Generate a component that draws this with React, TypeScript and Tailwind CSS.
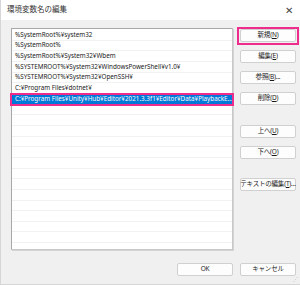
import React from "react";

const paths = [
  "%SystemRoot%¥system32",
  "%SystemRoot%",
  "%SystemRoot%¥System32¥Wbem",
  "%SYSTEMROOT%¥System32¥WindowsPowerShell¥v1.0¥",
  "%SYSTEMROOT%¥System32¥OpenSSH¥",
  "C:¥Program Files¥dotnet¥",
  "C:¥Program Files¥Unity¥Hub¥Editor¥2021.3.3f1¥Editor¥Data¥PlaybackE...",
];

const font = { fontFamily: '"Noto Sans", "Noto Sans CJK JP", sans-serif' };

function Btn({ label, mark, className = "" }: { label: string; mark?: string; className?: string }) {
  const dots = label === "参照" || label === "テキストの編集";
  return (
    <div className={"relative " + className}>
      <div className="h-[13px] w-[56px] flex items-center justify-center bg-[#fdfdfd] border border-[#d0d0d0] rounded-[2px] text-[6.5px] text-[#1a1a1a] leading-none whitespace-nowrap tracking-[-0.2px]">
        {label}
        {mark && (
          <span>
            (<span className="underline">{mark}</span>){dots ? "..." : ""}
          </span>
        )}
      </div>
    </div>
  );
}

export default function App() {
  return (
    <div className="w-[300px] h-[285px] bg-white flex flex-col overflow-hidden" style={font}>
      {/* title bar */}
      <div className="h-[20px] flex items-center justify-between pl-[6px] pr-[7px] bg-white border-l border-[#d6d6d6]">
        <span className="text-[7.5px] text-[#333]">環境変数名の編集</span>
        <span className="text-[10px] text-[#444] font-light leading-none">✕</span>
      </div>

      {/* body */}
      <div className="flex-1 bg-[#f0f0f0] border-l border-b border-[#d6d6d6] flex flex-col pl-[10px] pt-[8px] pr-[4px] relative">
        <div className="flex">
          {/* list */}
          <div className="w-[222px] h-[222px] bg-white border border-[#a8a8a8] border-b-[#c8c8c8] border-r-[#c8c8c8] shadow-[1px_1px_0_#d4d4d4] pt-[1px]">
            {paths.map((p, i) => {
              const sel = i === paths.length - 1;
              return (
                <div key={i} className="relative h-[10.67px] border-b border-[#f2f2f2] flex items-center">
                  <div
                    className={
                      "w-full h-full flex items-center pl-[3px] text-[6.3px] leading-none whitespace-nowrap overflow-hidden " +
                      (sel ? "bg-[#0078d7] text-white" : "text-[#1a1a1a]")
                    }
                  >
                    {p}
                  </div>
                  {sel && (
                    <div className="absolute left-[-2px] right-[-2px] top-[-1px] bottom-[-2px] border-2 border-[#ee2c8c]" />
                  )}
                </div>
              );
            })}
            {Array.from({ length: 13 }).map((_, i) => (
              <div key={"e" + i} className="h-[10.67px] border-b border-[#f2f2f2]" />
            ))}
          </div>

          {/* side buttons */}
          <div className="ml-[7px] flex flex-col pt-[1px]">
            <div className="relative">
              <Btn label="新規" mark="N" />
              <div className="absolute left-[-3px] right-[-3px] top-[-2px] bottom-[-3px] border-2 border-[#ee2c8c]" />
            </div>
            <Btn label="編集" mark="E" className="mt-[8px]" />
            <Btn label="参照" mark="B" className="mt-[8px]" />
            <Btn label="削除" mark="D" className="mt-[8px]" />
            <Btn label="上へ" mark="U" className="mt-[20px]" />
            <Btn label="下へ" mark="O" className="mt-[8px]" />
            <Btn label="テキストの編集" mark="T" className="mt-[19px]" />
          </div>
        </div>

        {/* bottom buttons */}
        <div className="flex justify-end gap-[7px] mt-[13px]">
          <Btn label="OK" />
          <Btn label="キャンセル" />
        </div>

        {/* resize grip */}
        <div className="absolute right-[2px] bottom-[2px] text-[5px] leading-none text-[#b0b0b0]">⋰</div>
      </div>
    </div>
  );
}
